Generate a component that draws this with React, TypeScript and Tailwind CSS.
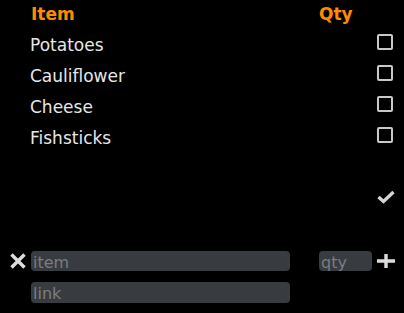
import { useState } from 'react';

const items = ['Potatoes', 'Cauliflower', 'Cheese', 'Fishsticks'];

function CheckIcon() {
  return (
    <svg width="18" height="14" viewBox="0 0 18 14" className="block">
      <polyline points="1.5,7 6.5,11.5 16.5,2" fill="none" stroke="#d4d4d4" strokeWidth="3.4" />
    </svg>
  );
}

function CrossIcon() {
  return (
    <svg width="16" height="16" viewBox="0 0 16 16" className="block">
      <path d="M1.5 1.5 L14.5 14.5 M14.5 1.5 L1.5 14.5" fill="none" stroke="#dcdcdc" strokeWidth="3.4" />
    </svg>
  );
}

function PlusIcon() {
  return (
    <svg width="18" height="14" viewBox="0 0 18 14" className="block">
      <path d="M0 7 H18 M9 0 V14" fill="none" stroke="#dcdcdc" strokeWidth="3.4" />
    </svg>
  );
}

export default function App() {
  const [checked, setChecked] = useState<boolean[]>(items.map(() => false));

  return (
    <div className="w-[404px] h-[313px] bg-black font-['DejaVu_Sans',sans-serif] text-[17px] leading-[20px] text-[#e6e6e6]">
      {/* header */}
      <div className="flex h-[30px] pt-[3.5px]">
        <span className="ml-[31px] w-[288px] font-bold text-[#ff8c00]">Item</span>
        <span className="font-bold text-[#ff8c00]">Qty</span>
      </div>

      {/* list */}
      {items.map((name, i) => (
        <div key={name} className="flex h-[31px]">
          <span className="ml-[30px] flex-1 pt-[5px]">{name}</span>
          <button
            onClick={() => setChecked(checked.map((c, j) => (j === i ? !c : c)))}
            className="mt-[4px] mr-[11px] w-[16px] h-[16px] border-2 border-[#c8c8c8] rounded-[2px] bg-black"
          >
            {checked[i] && <span className="block w-full h-full bg-[#c8c8c8]" />}
          </button>
        </div>
      ))}

      {/* confirm */}
      <div className="flex justify-end pr-[9px] pt-[36px] h-[97px]">
        <CheckIcon />
      </div>

      {/* add form */}
      <div className="flex items-center h-[20px] text-[16px]">
        <button className="ml-[10px] mr-[5px]">
          <CrossIcon />
        </button>
        <input
          placeholder="item"
          className="w-[259px] h-[20px] pt-[3px] pb-0 px-[2px] leading-[17px] rounded-[4px] bg-[#383b40] text-[#e6e6e6] placeholder:text-[#7a7d81] outline-none"
        />
        <input
          placeholder="qty"
          className="ml-[29px] w-[53px] h-[20px] pt-[3px] pb-0 px-[2px] leading-[17px] rounded-[4px] bg-[#383b40] text-[#e6e6e6] placeholder:text-[#7a7d81] outline-none"
        />
        <button className="ml-[5px]">
          <PlusIcon />
        </button>
      </div>
      <div className="flex mt-[11px] text-[16px]">
        <input
          placeholder="link"
          className="ml-[31px] w-[259px] h-[21px] pt-[2px] pb-0 px-[2px] leading-[17px] rounded-[4px] bg-[#383b40] text-[#e6e6e6] placeholder:text-[#7a7d81] outline-none"
        />
      </div>
    </div>
  );
}
